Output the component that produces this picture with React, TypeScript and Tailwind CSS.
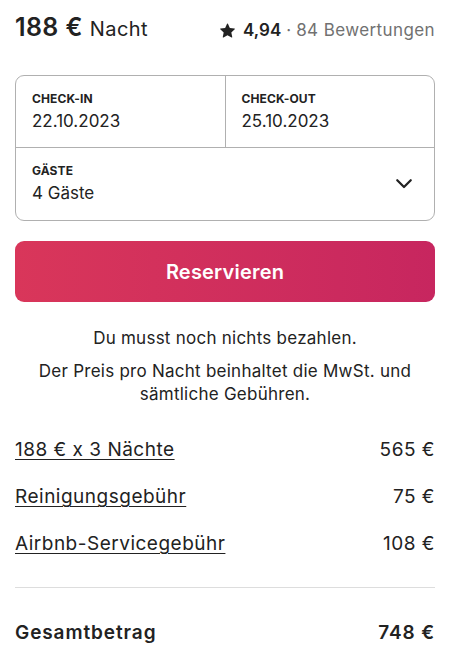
import React from 'react';

const font = { fontFamily: 'Inter, "Noto Sans", sans-serif' };

const Star = () => (
  <svg width="15" height="15" viewBox="0 0 32 32" className="fill-[#222222]">
    <path d="M15.094 1.579l-4.124 8.885-9.86 1.27a1 1 0 0 0-.542 1.736l7.293 6.565-1.965 9.852a1 1 0 0 0 1.483 1.061L16 25.951l8.625 4.997a1 1 0 0 0 1.482-1.06l-1.965-9.853 7.293-6.565a1 1 0 0 0-.541-1.735l-9.86-1.271-4.127-8.885a1 1 0 0 0-1.814 0z" />
  </svg>
);

const Chevron = () => (
  <svg width="18" height="18" viewBox="0 0 32 32" fill="none" stroke="#222222" strokeWidth="4" strokeLinecap="round" strokeLinejoin="round">
    <path d="M4 11l12 12 12-12" />
  </svg>
);

const rows = [
  { label: '188 € x 3 Nächte', value: '565 €' },
  { label: 'Reinigungsgebühr', value: '75 €' },
  { label: 'Airbnb-Servicegebühr', value: '108 €' },
];

export default function App() {
  return (
    <div style={font} className="w-[450px] h-[659px] overflow-hidden bg-white px-[15px] text-[#222222]">
      {/* Price header */}
      <div className="flex items-end justify-between pt-[9px] h-[42px] pb-[2px]">
        <div className="flex items-baseline gap-[7px]">
          <span className="text-[25px] font-semibold leading-none tracking-[0.4px]">188 €</span>
          <span className="text-[20px] leading-none tracking-[0.4px]">Nacht</span>
        </div>
        <div className="flex items-center text-[17px] leading-none pb-[1px]">
          <Star />
          <span className="ml-[8px] font-semibold">4,94</span>
          <span className="ml-[5px] text-[#717171]">·</span>
          <span className="ml-[5px] text-[#717171] tracking-[0.4px]">84 Bewertungen</span>
        </div>
      </div>

      {/* Date / guests box */}
      <div className="mt-[33px] border border-[#b0b0b0] rounded-[9px]">
        <div className="flex border-b border-[#b0b0b0]">
          <div className="flex-1 border-r border-[#b0b0b0] px-[16px] pt-[16px] pb-[15px]">
            <div className="text-[12px] font-bold leading-[14px] tracking-[0.1px]">CHECK-IN</div>
            <div className="text-[17px] leading-[22px] mt-[4px]">22.10.2023</div>
          </div>
          <div className="flex-1 px-[16px] pt-[16px] pb-[15px]">
            <div className="text-[12px] font-bold leading-[14px] tracking-[0.1px]">CHECK-OUT</div>
            <div className="text-[17px] leading-[22px] mt-[4px]">25.10.2023</div>
          </div>
        </div>
        <div className="flex items-center justify-between px-[16px] pt-[16px] pb-[16px]">
          <div>
            <div className="text-[12px] font-bold leading-[14px] tracking-[0.1px]">GÄSTE</div>
            <div className="text-[17px] leading-[22px] mt-[4px]">4 Gäste</div>
          </div>
          <div className="pr-[5px] pb-[2px]">
            <Chevron />
          </div>
        </div>
      </div>

      {/* Reserve button */}
      <button className="mt-[20px] w-full h-[61px] rounded-[9px] bg-gradient-to-r from-[#d9365a] to-[#c7265f] text-white text-[20px] font-semibold tracking-[0.2px]">
        Reservieren
      </button>

      {/* Notes */}
      <div className="mt-[25px] text-center text-[17px] leading-[23px] tracking-[0.25px]">
        <p>Du musst noch nichts bezahlen.</p>
        <p className="mt-[10px] px-[10px]">Der Preis pro Nacht beinhaltet die MwSt. und sämtliche Gebühren.</p>
      </div>

      {/* Price breakdown */}
      <div className="mt-[32px] flex flex-col gap-[24px]">
        {rows.map((r) => (
          <div key={r.label} className="flex justify-between text-[19px] leading-[23px] tracking-[0.5px]">
            <span className="underline underline-offset-[3px] decoration-[1px]">{r.label}</span>
            <span>{r.value}</span>
          </div>
        ))}
      </div>

      <div className="mt-[32px] border-t border-[#dddddd]" />

      <div className="mt-[33px] flex justify-between text-[19px] font-semibold leading-[23px] tracking-[0.9px]">
        <span>Gesamtbetrag</span>
        <span>748 €</span>
      </div>
    </div>
  );
}
